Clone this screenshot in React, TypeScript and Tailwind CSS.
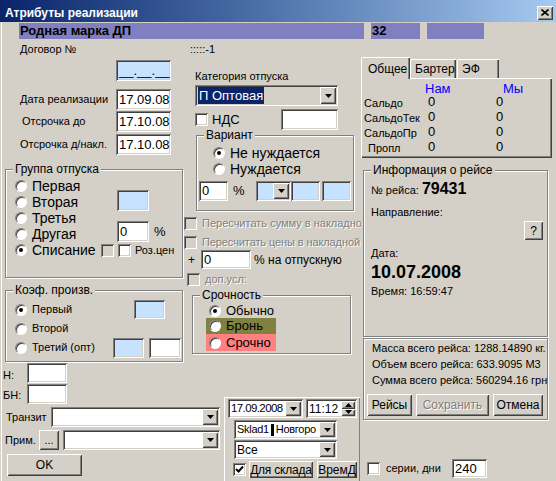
import React from 'react';

const SUNKEN =
  'shadow-[inset_1px_1px_0_#808080,inset_-1px_-1px_0_#ffffff,inset_2px_2px_0_#404040,inset_-2px_-2px_0_#d4d0c8]';
const RAISED =
  'shadow-[inset_1px_1px_0_#ffffff,inset_-1px_-1px_0_#404040,inset_2px_2px_0_#d4d0c8,inset_-2px_-2px_0_#808080]';
const ETCHED = 'border border-[#808080] shadow-[inset_1px_1px_0_#ffffff,1px_1px_0_#ffffff]';
const DISABLED = 'text-[#808080] [text-shadow:1px_1px_0_#ffffff]';

type P = { className?: string; children?: React.ReactNode };

const Edit = ({ className = '', children }: P) => (
  <div className={`${SUNKEN} flex items-center pl-[3px] overflow-hidden whitespace-nowrap shrink-0 ${className}`}>
    {children}
  </div>
);

const Arrow = ({ up }: { up?: boolean }) => (
  <svg width="7" height="4" viewBox="0 0 7 4">
    <polygon points={up ? '0,4 7,4 3.5,0' : '0,0 7,0 3.5,4'} fill="#000" />
  </svg>
);

const Combo = ({ className = '', children }: P) => (
  <div className={`${SUNKEN} flex p-[2px] shrink-0 ${className}`}>
    <div className="flex-1 flex items-center pl-[1px] overflow-hidden whitespace-nowrap">{children}</div>
    <div className={`${RAISED} w-[16px] bg-[#d4d0c8] flex items-center justify-center`}>
      <Arrow />
    </div>
  </div>
);

const Btn = ({ className = '', children }: P) => (
  <div className={`${RAISED} bg-[#d4d0c8] flex items-center justify-center shrink-0 whitespace-nowrap ${className}`}>
    {children}
  </div>
);

const Radio = ({ on }: { on?: boolean }) => (
  <div className="w-[12px] h-[12px] rounded-full bg-white border border-t-[#808080] border-l-[#808080] border-r-white border-b-white shadow-[inset_1px_1px_0_#404040] flex items-center justify-center shrink-0">
    {on && <div className="w-[4px] h-[4px] rounded-full bg-black" />}
  </div>
);

const Check = ({ on, gray }: { on?: boolean; gray?: boolean }) => (
  <div className={`${SUNKEN} w-[13px] h-[13px] ${gray ? 'bg-[#d4d0c8]' : 'bg-white'} flex items-center justify-center shrink-0`}>
    {on && (
      <svg width="9" height="9" viewBox="0 0 9 9">
        <path d="M1 4 L3.5 6.5 L8 1.5" stroke="#000" strokeWidth="2" fill="none" />
      </svg>
    )}
  </div>
);

const Group = ({ label, className = '', children }: P & { label: string }) => (
  <fieldset className={`${ETCHED} shrink-0 ${className}`}>
    <legend className="ml-[7px] px-[2px] bg-[#d4d0c8] text-[12px] leading-[13px]">{label}</legend>
    {children}
  </fieldset>
);

const RadioRow = ({ label, on, className = '' }: { label: string; on?: boolean; className?: string }) => (
  <div className={`flex items-center ${className}`}>
    <Radio on={on} />
    <span className="ml-[5px] whitespace-nowrap">{label}</span>
  </div>
);

const DateRow = ({ label, value, pad }: { label: string; value: string; pad: string }) => (
  <div className="flex items-center h-[21px]">
    <span className={`w-[116px] whitespace-nowrap ${pad}`}>{label}</span>
    <Edit className="w-[55px] h-[21px] bg-white text-[13px]">{value}</Edit>
  </div>
);

const LeftColumn = () => (
  <div className="w-[184px] flex flex-col shrink-0">
    <div className="pl-[116px]">
      <Edit className="w-[55px] h-[21px] bg-[#c6e2ff] text-[13px]">__.__.__</Edit>
    </div>
    <div className="mt-[8px]">
      <DateRow label="Дата реализации" value="17.09.08" pad="pl-[20px]" />
    </div>
    <div className="mt-[1px]">
      <DateRow label="Отсрочка до" value="17.10.08" pad="pl-[22px]" />
    </div>
    <div className="mt-[2px]">
      <DateRow label="Отсрочка д/накл." value="17.10.08" pad="pl-[20px]" />
    </div>

    <Group label="Группа отпуска" className="mt-[8px] ml-[5px] w-[178px] h-[115px]">
      <div className="pl-[9px] pt-[2px] text-[14px]">
        <div className="flex">
          <div className="w-[102px] flex flex-col">
            <RadioRow label="Первая" className="h-[16px]" />
            <RadioRow label="Вторая" className="h-[16px]" />
            <RadioRow label="Третья" className="h-[16px]" />
            <RadioRow label="Другая" className="h-[16px]" />
          </div>
          <div className="flex flex-col pt-[12px]">
            <Edit className="w-[32px] h-[21px] bg-[#c6e2ff]" />
            <div className="mt-[10px] flex items-center">
              <Edit className="w-[32px] h-[21px] bg-white text-[13px]">0</Edit>
              <span className="ml-[5px] text-[13px]">%</span>
            </div>
          </div>
        </div>
        <div className="flex items-center h-[16px]">
          <Radio on />
          <span className="ml-[5px] w-[69px] whitespace-nowrap">Списание</span>
          <Check gray />
          <div className="ml-[4px]">
            <Check />
          </div>
          <span className="ml-[4px] text-[11px]">Роз.цен</span>
        </div>
      </div>
    </Group>

    <Group label="Коэф. произв." className="mt-[6px] ml-[5px] w-[178px] h-[78px]">
      <div className="pl-[9px] pt-[3px] text-[11px]">
        <div className="flex items-center h-[19px]">
          <Radio on />
          <span className="ml-[5px] w-[102px]">Первый</span>
          <Edit className="w-[31px] h-[19px] bg-[#c6e2ff]" />
        </div>
        <div className="flex items-center h-[19px]">
          <Radio />
          <span className="ml-[5px]">Второй</span>
        </div>
        <div className="flex items-center h-[19px]">
          <Radio />
          <span className="ml-[5px] w-[81px] whitespace-nowrap">Третий (опт)</span>
          <Edit className="w-[31px] h-[20px] bg-[#c6e2ff]" />
          <Edit className="ml-[5px] w-[32px] h-[20px] bg-white" />
        </div>
      </div>
    </Group>
  </div>
);

const MiddleColumn = () => (
  <div className="w-[177px] flex flex-col overflow-hidden shrink-0">
    <div className="mt-[9px] pl-[11px] text-[11px] leading-[14px]">Категория отпуска</div>
    <Combo className="mt-[2px] ml-[11px] w-[143px] h-[21px] text-[13px]">
      <span className="bg-[#0a246a] text-white px-[1px]">П Оптовая</span>
    </Combo>
    <div className="mt-[3px] h-[21px] flex items-center pl-[11px]">
      <Check />
      <span className="ml-[4px] w-[69px] text-[13px]">НДС</span>
      <Edit className="w-[57px] h-[21px] bg-white" />
    </div>

    <fieldset className={`${ETCHED} shrink-0 ml-[12px] w-[158px] h-[81px]`}>
      <legend className="ml-[7px] px-[2px] bg-[#d4d0c8] text-[12px] leading-[10px]">Вариант</legend>
      <div className="pt-[5px] text-[14px]">
        <RadioRow label="Не нуждается" on className="h-[16px] pl-[16px]" />
        <RadioRow label="Нуждается" className="h-[16px] pl-[16px]" />
        <div className="mt-[4px] pl-[2px] flex items-center">
          <Edit className="w-[29px] h-[20px] bg-white text-[13px]">0</Edit>
          <span className="ml-[5px] w-[23px] text-[13px]">%</span>
          <Combo className="w-[35px] h-[20px] bg-[#c6e2ff]" />
          <Edit className="w-[29px] h-[20px] bg-[#c6e2ff]" />
          <Edit className="ml-[2px] w-[29px] h-[20px] bg-[#c6e2ff]" />
        </div>
      </div>
    </fieldset>

    <div className="mt-[6px] h-[13px] flex items-center">
      <Check gray />
      <span className={`ml-[5px] text-[11px] whitespace-nowrap ${DISABLED}`}>Пересчитать сумму в накладно</span>
    </div>
    <div className="mt-[6px] h-[13px] flex items-center">
      <Check gray />
      <span className={`ml-[5px] text-[11px] whitespace-nowrap tracking-[-0.1px] ${DISABLED}`}>Пересчитать цены в накладной</span>
    </div>
    <div className="mt-[1px] h-[19px] flex items-center pl-[4px] text-[12px]">
      <span className="w-[13px]">+</span>
      <Edit className="w-[50px] h-[19px] bg-white text-[13px]">0</Edit>
      <span className="ml-[3px] whitespace-nowrap">% на отпускную</span>
    </div>
    <div className="mt-[4px] h-[13px] flex items-center pl-[3px]">
      <Check gray />
      <span className={`ml-[5px] text-[11px] ${DISABLED}`}>доп.усл:</span>
    </div>

    <Group label="Срочность" className="mt-[3px] ml-[8px] w-[159px] h-[65px]">
      <div className="pt-[1px] text-[13px]">
        <RadioRow label="Обычно" on className="h-[15px] ml-[13px] pl-[3px]" />
        <RadioRow label="Бронь" className="h-[16px] ml-[13px] pl-[3px] w-[70px] bg-[#808040]" />
        <RadioRow label="Срочно" className="h-[17px] ml-[13px] pl-[3px] w-[70px] bg-[#ff8080]" />
      </div>
    </Group>
  </div>
);

const BottomLeft = () => (
  <div className="w-[224px] flex flex-col shrink-0 text-[11px]">
    <div className="mt-[1px] h-[20px] flex">
      <span className="w-[27px] pl-[3px] pt-[6px] leading-[12px]">Н:</span>
      <Edit className="w-[40px] h-[20px] bg-white" />
    </div>
    <div className="mt-[1px] h-[20px] flex">
      <span className="w-[27px] pl-[3px] pt-[5px] leading-[12px]">БН:</span>
      <Edit className="w-[40px] h-[20px] bg-white" />
    </div>
    <div className="mt-[3px] h-[20px] flex items-center">
      <span className="w-[51px] pl-[6px]">Транзит</span>
      <Combo className="w-[169px] h-[20px] bg-white" />
    </div>
    <div className="mt-[3px] h-[20px] flex items-center">
      <span className="w-[39px] pl-[5px]">Прим.</span>
      <Btn className="w-[20px] h-[20px] text-[11px]">...</Btn>
      <Combo className="ml-[4px] w-[157px] h-[20px] bg-white" />
    </div>
    <Btn className="mt-[4px] ml-[7px] w-[75px] h-[22px] text-[12px]">OK</Btn>
  </div>
);

const BottomPanel = () => (
  <div className="mt-[35px] w-[136px] h-[90px] shrink-0 shadow-[inset_1px_1px_0_#ffffff,inset_-1px_-1px_0_#808080] flex flex-col text-[12px]">
    <div className="mt-[2px] flex">
      <Combo className="ml-[4px] w-[75px] h-[19px] bg-white text-[11.5px] tracking-[-0.6px]">17.09.2008</Combo>
      <div className={`${SUNKEN} ml-[3px] w-[51px] h-[19px] flex p-[2px] bg-white`}>
        <div className="flex-1 flex items-center pl-[1px]">11:12</div>
        <div className="w-[14px] flex flex-col">
          <div className={`${RAISED} flex-1 bg-[#d4d0c8] flex items-center justify-center`}>
            <Arrow up />
          </div>
          <div className={`${RAISED} flex-1 bg-[#d4d0c8] flex items-center justify-center`}>
            <Arrow />
          </div>
        </div>
      </div>
    </div>
    <Combo className="mt-[2px] ml-[10px] w-[103px] h-[19px] bg-white text-[11px] tracking-[-0.3px]">
      Sklad1<span className="inline-block w-[3px] h-[12px] bg-black mx-[2px]" />Новгоро
    </Combo>
    <Combo className="mt-[1px] ml-[10px] w-[103px] h-[19px] bg-white">Все</Combo>
    <div className="mt-[2px] flex items-center">
      <div className="ml-[9px]">
        <Check on />
      </div>
      <Btn className="ml-[3px] w-[64px] h-[17px] tracking-[-0.2px]">Для склада</Btn>
      <Btn className="ml-[4px] w-[40px] h-[17px]">ВремД</Btn>
    </div>
  </div>
);

const SaldoRow = ({ label, pad }: { label: string; pad: string }) => (
  <div className="flex h-[15px] items-center text-[11px]">
    <span className={`w-[66px] ${pad}`}>{label}</span>
    <span className="w-[68px] text-[13px] -mt-[3px]">0</span>
    <span className="text-[13px] -mt-[3px]">0</span>
  </div>
);

const tab = 'h-[19px] bg-[#d4d0c8] border-t border-l border-white rounded-tl-[2px] shadow-[inset_-1px_0_0_#404040,inset_-2px_0_0_#808080] flex items-center';

const RightColumn = () => (
  <div className="w-[195px] flex flex-col shrink-0 text-[11px]">
    <div className="mt-[18px] flex items-end h-[21px] text-[12px]">
      <div className={`${tab} relative z-10 w-[49px] !h-[22px] -mb-[1px] pl-[6px]`}>Общее</div>
      <div className={`${tab} w-[46px] pl-[4px]`}>Бартер</div>
      <div className={`${tab} ml-[1px] w-[42px] pl-[4px]`}>ЭФ</div>
    </div>
    <div className="w-[191px] h-[80px] border-t border-l border-white shadow-[inset_-1px_-1px_0_#404040,inset_-2px_-2px_0_#808080]">
      <div className="mt-[2px] h-[15px] flex items-center text-[13px] text-[#0000ff]">
        <span className="ml-[63px] w-[78px]">Нам</span>
        <span>Мы</span>
      </div>
      <SaldoRow label="Сальдо" pad="pl-[2px]" />
      <SaldoRow label="СальдоТек" pad="pl-[2px]" />
      <SaldoRow label="СальдоПр" pad="pl-[2px]" />
      <SaldoRow label="Пропл" pad="pl-[6px]" />
    </div>

    <Group label="Информация о рейсе" className="mt-[6px] ml-[2px] w-[185px] h-[173px]">
      <div className="flex flex-col pl-[7px] pr-[4px]">
        <div className="pt-[3px] flex items-baseline leading-[18px]">
          <span>№ рейса:</span>
          <span className="ml-[3px] text-[16px] font-bold">79431</span>
        </div>
        <div className="mt-[6px] leading-[14px]">Направление:</div>
        <div className="mt-[2px] flex justify-end">
          <Btn className="w-[19px] h-[19px] text-[12px]">?</Btn>
        </div>
        <div className="mt-[6px] leading-[14px]">Дата:</div>
        <div className="mt-[2px] text-[18px] font-bold leading-[21px]">10.07.2008</div>
        <div className="mt-[1px] leading-[14px]">Время: 16:59:47</div>
      </div>
    </Group>

    <div className={`${ETCHED} mt-[1px] ml-[2px] w-[185px] h-[82px] shrink-0 overflow-hidden`}>
      <div className="pt-[1px] pl-[8px] leading-[16px] whitespace-nowrap">
        <div>Масса всего рейса: 1288.14890 кг.</div>
        <div>Объем всего рейса: 633.9095 М3</div>
        <div>Сумма всего рейса: 560294.16 грн</div>
      </div>
      <div className="mt-[6px] flex text-[12px]">
        <Btn className="ml-[3px] w-[45px] h-[22px]">Рейсы</Btn>
        <Btn className={`ml-[4px] w-[73px] h-[22px] ${DISABLED}`}>Сохранить</Btn>
        <Btn className="ml-[4px] w-[50px] h-[22px]">Отмена</Btn>
      </div>
    </div>

    <div className="mt-[39px] h-[19px] flex items-center">
      <div className="ml-[6px]">
        <Check />
      </div>
      <span className="ml-[6px] w-[66px] whitespace-nowrap">серии, дни</span>
      <Edit className="w-[35px] h-[19px] bg-white text-[13px]">240</Edit>
    </div>
  </div>
);

export default function App() {
  return (
    <div className="w-[556px] h-[481px] bg-[#d4d0c8] overflow-hidden flex flex-col font-['Liberation_Sans',Arial,sans-serif] text-[11px] text-black select-none shadow-[inset_1px_0_0_#d4d0c8,inset_2px_0_0_#ffffff]">
      <div className="h-[22px] pt-[3px] shrink-0 bg-linear-to-r from-[#0a246a] to-[#a6caf0] flex items-center justify-between pl-[5px] pr-[3px]">
        <span className="text-white font-bold text-[12px] whitespace-nowrap">Атрибуты реализации</span>
        <Btn className="w-[16px] h-[14px]">
          <svg width="8" height="7" viewBox="0 0 8 7">
            <path d="M0.5 0.5 L7.5 6.5 M7.5 0.5 L0.5 6.5" stroke="#000" strokeWidth="1.6" />
          </svg>
        </Btn>
      </div>

      <div className="mt-[1px] h-[16px] shrink-0 flex pl-[19px] gap-[7px] text-[13px] font-bold leading-[16px]">
        <div className="w-[345px] bg-[#8080c0] pl-[1px]">Родная марка ДП</div>
        <div className="w-[49px] bg-[#8080c0] pl-[1px]">32</div>
        <div className="w-[57px] bg-[#8080c0]" />
      </div>

      <div className="flex flex-1 min-h-0">
        <div className="w-[361px] flex flex-col shrink-0">
          <div className="h-[21px] flex items-center shrink-0">
            <span className="w-[190px] pl-[20px]">Договор №</span>
            <span>:::::-1</span>
          </div>
          <div className="flex h-[302px] shrink-0">
            <LeftColumn />
            <MiddleColumn />
          </div>
          <div className="flex flex-1">
            <BottomLeft />
            <BottomPanel />
          </div>
        </div>
        <RightColumn />
      </div>
    </div>
  );
}
